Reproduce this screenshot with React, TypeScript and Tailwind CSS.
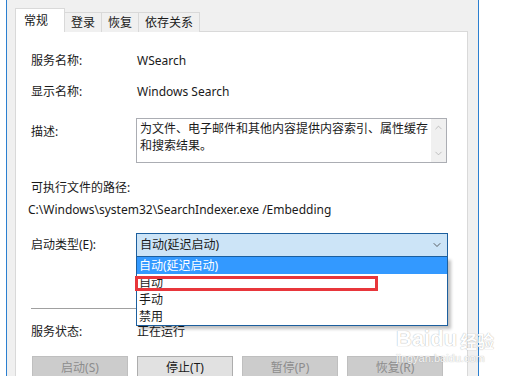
import { ChevronDown, ChevronUp } from "lucide-react";

const FONT = { fontFamily: '"Noto Sans", "Noto Sans CJK SC", sans-serif' };

const tabs = ["登录", "恢复", "依存关系"];
const options = ["自动(延迟启动)", "自动", "手动", "禁用"];
const buttons = [
    { label: "启动(S)", disabled: true },
    { label: "停止(T)", disabled: false },
    { label: "暂停(P)", disabled: true },
    { label: "恢复(R)", disabled: true },
];

function Row({ label, children, className = "" }: { label: string; children: React.ReactNode; className?: string }) {
    return (
        <div className={`flex h-4 items-center leading-4 ${className}`}>
            <span className="w-[106px] shrink-0">{label}</span>
            <span>{children}</span>
        </div>
    );
}

export default function App() {
    return (
        <div className="relative flex h-[376px] w-[517px] overflow-hidden bg-white text-[12px] text-[#1a1a1a]" style={FONT}>
            <div className="w-[6px] shrink-0 bg-white" />
            <div className="w-px shrink-0 bg-[#2b7fd0]" />
            <div className="w-[471px] shrink-0 bg-[#f0f0f0] pl-[8px] pt-[8px]">
                {/* tabs */}
                <div className="relative z-10 flex h-[24px] items-end">
                    <div className="flex h-[24px] w-[50px] items-center border border-b-0 border-[#d9d9d9] bg-white pl-[8px]">
                        常规
                    </div>
                    {tabs.map((t) => (
                        <div
                            key={t}
                            className="flex h-[20px] items-center border border-l-0 border-b-0 border-[#d9d9d9] bg-[#f0f0f0] px-[6px] pt-[1px]"
                        >
                            {t}
                        </div>
                    ))}
                </div>

                {/* panel */}
                <div className="-mt-px h-[400px] w-[453px] border border-[#d9d9d9] bg-white pl-[15px]">
                    <Row label="服务名称:" className="mt-[21px]">
                        WSearch
                    </Row>
                    <Row label="显示名称:" className="mt-[15px]">
                        Windows Search
                    </Row>

                    <div className="mt-[18px] flex">
                        <span className="mt-[6px] w-[105px] shrink-0 leading-4">描述:</span>
                        <div className="flex h-[45px] w-[311px] border border-[#abadb3] bg-white">
                            <div className="flex-1 pl-[3px] pt-px leading-[17px]">
                                为文件、电子邮件和其他内容提供内容索引、属性缓存
                                <br />
                                和搜索结果。
                            </div>
                            <div className="flex w-[15px] flex-col items-center justify-between bg-[#f0f0f0] py-[3px] text-[#a8a8a8]">
                                <ChevronUp size={11} strokeWidth={1.5} />
                                <ChevronDown size={11} strokeWidth={1.5} />
                            </div>
                        </div>
                    </div>

                    <div className="mt-[17px] h-4 leading-4">可执行文件的路径:</div>
                    <div className="-ml-[3px] mt-[6px] h-4 leading-4">C:\Windows\system32\SearchIndexer.exe /Embedding</div>

                    <div className="mt-[15px] flex items-center">
                        <span className="w-[105px] shrink-0 leading-4">启动类型(E):</span>
                        <div className="relative z-20 w-[312px]">
                            <div className="flex h-[24px] items-center justify-between border border-[#1c5f9e] bg-[#cce4f7] pl-[3px] pr-[4px]">
                                <span>自动(延迟启动)</span>
                                <ChevronDown size={12} strokeWidth={1.5} className="text-[#333]" />
                            </div>
                            <div className="absolute left-0 top-[24px] w-[312px] border border-t-0 border-[#1c5f9e] bg-white shadow-[3px_3px_3px_rgba(0,0,0,0.25)]">
                                {options.map((o, i) => (
                                    <div
                                        key={o}
                                        className={`h-[17px] pl-[2px] leading-[17px] ${i === 0 ? "bg-[#3399ff] text-white" : ""}`}
                                    >
                                        {o}
                                    </div>
                                ))}
                                <div className="absolute left-[-2px] top-[19px] h-[15px] w-[243px] border-[3px] border-[#e8363b]" />
                            </div>
                        </div>
                    </div>

                    <div className="mt-[51px] h-px w-[417px] bg-[#a0a0a0]" />

                    <Row label="服务状态:" className="mt-[15px]">
                        正在运行
                    </Row>

                    <div className="mt-[16px] flex gap-[9px] pl-px">
                        {buttons.map((b) => (
                            <div
                                key={b.label}
                                className={`flex h-[24px] w-[96px] items-center justify-center border ${
                                    b.disabled
                                        ? "border-[#bfbfbf] bg-[#cccccc] text-[#8c8c8c]"
                                        : "border-[#adadad] bg-[#e1e1e1] text-[#1a1a1a]"
                                }`}
                            >
                                {b.label}
                            </div>
                        ))}
                    </div>
                </div>
            </div>
            <div className="w-px shrink-0 bg-[#2b7fd0]" />
            <div className="flex-1 bg-white" />

            {/* watermark */}
            <div className="pointer-events-none absolute left-[396px] top-[328px] z-30 flex flex-col items-start whitespace-nowrap text-white opacity-85">
                <div className="flex items-end leading-none [text-shadow:0_0_1px_#8a8a8a]">
                    <span className="text-[22px] font-bold" style={{ fontFamily: '"Liberation Sans", sans-serif' }}>
                        Baidu
                    </span>
                    <span className="ml-[3px] text-[17px] font-bold">经验</span>
                </div>
                <span
                    className="mt-[3px] text-[11px] leading-none [text-shadow:0_0_1px_#8a8a8a]"
                    style={{ fontFamily: '"Liberation Sans", sans-serif' }}
                >
                    jingyan.baidu.com
                </span>
            </div>
        </div>
    );
}
